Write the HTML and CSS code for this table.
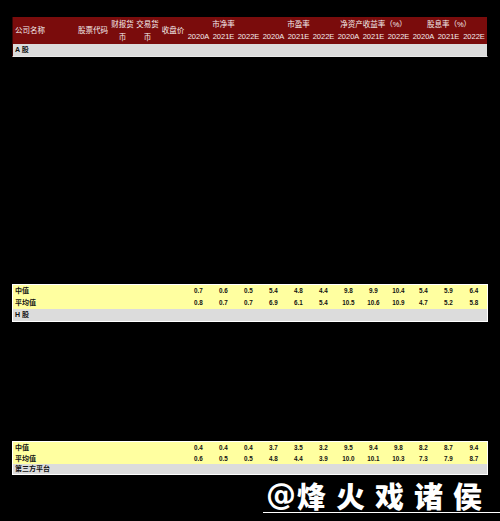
FILE: index.html
```html
<!DOCTYPE html>
<html>
<head>
<meta charset="utf-8">
<link rel="stylesheet" href="styles.css">
</head>
<body>
<div class="sheet">
  <div class="block block-top">
    <div class="head">
      <div class="h-cell span2 left">公司名称</div>
      <div class="h-cell span2">股票代码</div>
      <div class="h-cell span2 wrap">财报货币</div>
      <div class="h-cell span2 wrap">交易货币</div>
      <div class="h-cell span2">收盘价</div>
      <div class="h-cell group">市净率</div>
      <div class="h-cell group">市盈率</div>
      <div class="h-cell group">净资产收益率（%）</div>
      <div class="h-cell group">股息率（%）</div>
      <div class="h-cell year">2020A</div>
      <div class="h-cell year">2021E</div>
      <div class="h-cell year">2022E</div>
      <div class="h-cell year">2020A</div>
      <div class="h-cell year">2021E</div>
      <div class="h-cell year">2022E</div>
      <div class="h-cell year">2020A</div>
      <div class="h-cell year">2021E</div>
      <div class="h-cell year">2022E</div>
      <div class="h-cell year">2020A</div>
      <div class="h-cell year">2021E</div>
      <div class="h-cell year">2022E</div>
    </div>
    <div class="section">A 股</div>
  </div>

  <div class="gap gap-a"></div>

  <div class="block block-stats">
    <div class="row stat">
      <div class="label">中值</div>
      <div class="num">0.7</div><div class="num">0.6</div><div class="num">0.5</div>
      <div class="num">5.4</div><div class="num">4.8</div><div class="num">4.4</div>
      <div class="num">9.8</div><div class="num">9.9</div><div class="num">10.4</div>
      <div class="num">5.4</div><div class="num">5.9</div><div class="num">6.4</div>
    </div>
    <div class="row stat">
      <div class="label">平均值</div>
      <div class="num">0.8</div><div class="num">0.7</div><div class="num">0.7</div>
      <div class="num">6.9</div><div class="num">6.1</div><div class="num">5.4</div>
      <div class="num">10.5</div><div class="num">10.6</div><div class="num">10.9</div>
      <div class="num">4.7</div><div class="num">5.2</div><div class="num">5.8</div>
    </div>
    <div class="section">H 股</div>
  </div>

  <div class="gap gap-h"></div>

  <div class="block block-stats block-small">
    <div class="row stat">
      <div class="label">中值</div>
      <div class="num">0.4</div><div class="num">0.4</div><div class="num">0.4</div>
      <div class="num">3.7</div><div class="num">3.5</div><div class="num">3.2</div>
      <div class="num">9.5</div><div class="num">9.4</div><div class="num">9.8</div>
      <div class="num">8.2</div><div class="num">8.7</div><div class="num">9.4</div>
    </div>
    <div class="row stat">
      <div class="label">平均值</div>
      <div class="num">0.6</div><div class="num">0.5</div><div class="num">0.5</div>
      <div class="num">4.8</div><div class="num">4.4</div><div class="num">3.9</div>
      <div class="num">10.0</div><div class="num">10.1</div><div class="num">10.3</div>
      <div class="num">7.3</div><div class="num">7.9</div><div class="num">8.7</div>
    </div>
    <div class="section">第三方平台</div>
  </div>
</div>

<div class="watermark"><span class="at">@</span><span>烽火戏诸侯</span></div>
</body>
</html>
```

FILE: styles.css
```css
html, body {
  margin: 0;
  padding: 0;
  background: #000;
}

body {
  width: 500px;
  height: 521px;
  overflow: hidden;
  font-family: "Liberation Sans", "Noto Sans CJK SC", sans-serif;
}

.sheet {
  padding-top: 17px;
  margin-left: 12px;
  width: 476px;
}

.block {
  border-left: 1px solid #fff;
  border-right: 1px solid #fff;
}

.block-top {
  border-left-color: #3a0606;
  border-right-color: #000;
  border-bottom: 1px solid #e8e8e8;
}

.head {
  display: grid;
  grid-template-columns: 63px 34px 25px 25px 26px repeat(11, 25px) 26px;
  grid-template-rows: 15px 12px;
  background: #7a0c0c;
  color: #f4ecec;
  font-size: 7.5px;
  line-height: 8.5px;
}

.h-cell {
  display: flex;
  align-items: center;
  justify-content: center;
  text-align: center;
  white-space: nowrap;
}

.span2 {
  grid-row: 1 / span 2;
  padding-top: 2px;
}

.wrap {
  white-space: normal;
  line-height: 13px;
  padding-top: 0;
}

.left {
  justify-content: flex-start;
  padding-left: 2px;
}

.group {
  grid-column: span 3;
  padding-top: 2px;
}

.year {
  padding-bottom: 1px;
}

.section {
  height: 12px;
  background: #dcdcdc;
  color: #111;
  font-size: 7px;
  font-weight: bold;
  line-height: 12px;
  padding-left: 2px;
}

.gap-a {
  height: 227px;
}

.gap-h {
  height: 119px;
}

.block-stats {
  border-top: 1px solid #fff;
  border-bottom: 1px solid #fff;
}

.row {
  display: grid;
  grid-template-columns: 63px 34px 25px 25px 26px repeat(11, 25px) 26px;
  height: 12px;
  background: #ffffa0;
  color: #111;
  font-weight: bold;
  line-height: 12px;
}

.label {
  grid-column: 1 / 6;
  padding-left: 2px;
  font-size: 7px;
}

.num {
  text-align: center;
  font-size: 6.3px;
}

.block-small .row {
  height: 11px;
  line-height: 11px;
}

.block-small .section {
  height: 10px;
  line-height: 10px;
}

.watermark {
  margin-top: 5px;
  margin-left: 263px;
  width: 237px;
  height: 32px;
  border-bottom: 1px solid #fff;
  color: #fff;
  font-family: "Noto Sans CJK SC", sans-serif;
  font-weight: 900;
  font-size: 29px;
  line-height: 30px;
  letter-spacing: 10px;
  display: flex;
  white-space: nowrap;
}

.at {
  font-family: "DejaVu Sans", sans-serif;
  font-weight: bold;
  font-size: 30px;
  margin-left: 3px;
  margin-right: 1px;
  letter-spacing: 0;
}
```
